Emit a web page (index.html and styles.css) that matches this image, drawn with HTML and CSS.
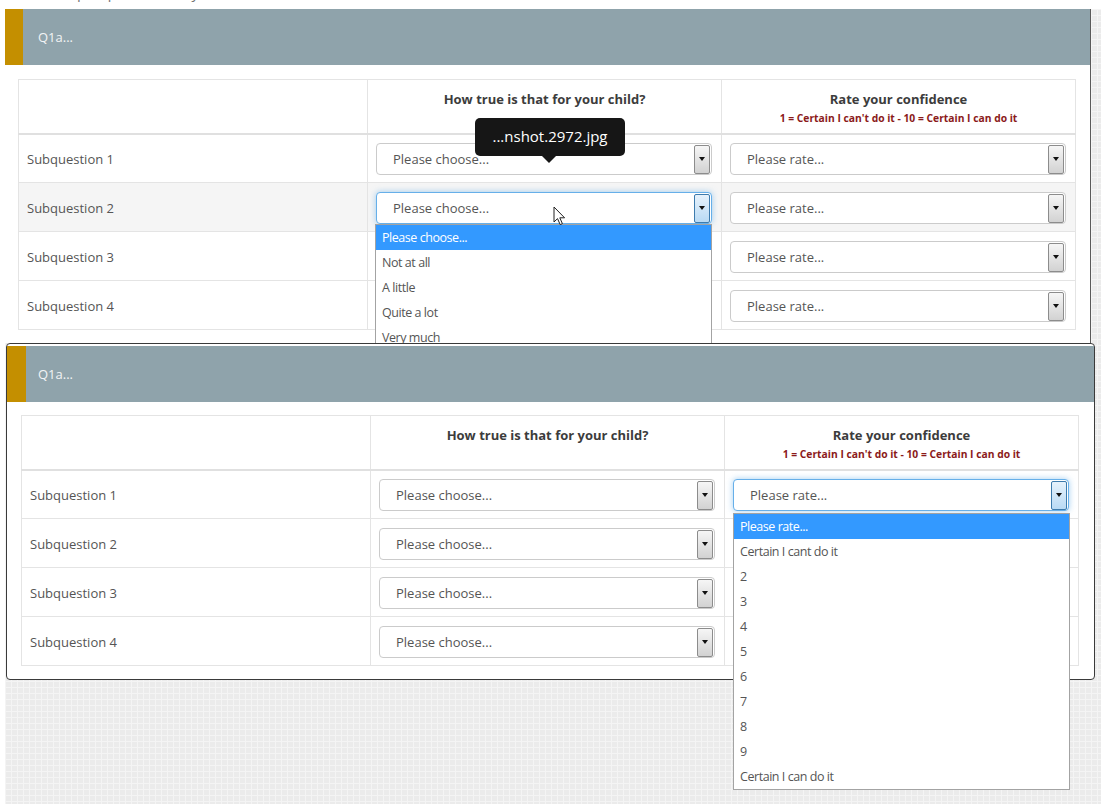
FILE: index.html
```html
<!DOCTYPE html>
<html>
<head>
<meta charset="utf-8">
<link rel="stylesheet" href="styles.css">
</head>
<body>
<div class="topline"><span>1 Example question for your child</span></div>
<div class="canvas">
  <section class="panel panel-a">
    <div class="panel-head"><span class="bar"></span><span class="title">Q1a...</span></div>
    <div class="panel-body">
      <table class="grid">
        <colgroup><col class="c1"><col class="c2"><col class="c3"></colgroup>
        <thead>
          <tr>
            <th></th>
            <th>How true is that for your child?</th>
            <th>Rate your confidence<div class="sub">1 = Certain I can't do it - 10 = Certain I can do it</div></th>
          </tr>
        </thead>
        <tbody>
          <tr><td class="q">Subquestion 1</td><td><div class="select"><span class="lbl">Please choose...</span><span class="btn"></span></div></td><td><div class="select"><span class="lbl">Please rate...</span><span class="btn"></span></div></td></tr>
          <tr class="hover"><td class="q">Subquestion 2</td><td><div class="select focus"><span class="lbl">Please choose...</span><span class="btn"></span></div></td><td><div class="select"><span class="lbl">Please rate...</span><span class="btn"></span></div></td></tr>
          <tr><td class="q">Subquestion 3</td><td><div class="select"><span class="lbl">Please choose...</span><span class="btn"></span></div></td><td><div class="select"><span class="lbl">Please rate...</span><span class="btn"></span></div></td></tr>
          <tr><td class="q">Subquestion 4</td><td><div class="select"><span class="lbl">Please choose...</span><span class="btn"></span></div></td><td><div class="select"><span class="lbl">Please rate...</span><span class="btn"></span></div></td></tr>
        </tbody>
      </table>
    </div>
    <div class="tooltip">...nshot.2972.jpg</div>
    <ul class="dropdown dd-a">
      <li class="sel">Please choose...</li>
      <li>Not at all</li>
      <li>A little</li>
      <li>Quite a lot</li>
      <li>Very much</li>
    </ul>
    <svg class="cursor" width="13" height="20" viewBox="0 0 13 20"><path d="M1 1 L1 16 L4.5 12.6 L7.2 18.6 L9.4 17.6 L6.8 11.8 L11.6 11.8 Z" fill="#fff" stroke="#222" stroke-width="1" stroke-linejoin="round"/></svg>
  </section>

  <section class="panel panel-b">
    <div class="panel-head"><span class="bar"></span><span class="title">Q1a...</span></div>
    <div class="panel-body">
      <table class="grid">
        <colgroup><col class="c1"><col class="c2"><col class="c3"></colgroup>
        <thead>
          <tr>
            <th></th>
            <th>How true is that for your child?</th>
            <th>Rate your confidence<div class="sub">1 = Certain I can't do it - 10 = Certain I can do it</div></th>
          </tr>
        </thead>
        <tbody>
          <tr><td class="q">Subquestion 1</td><td><div class="select"><span class="lbl">Please choose...</span><span class="btn"></span></div></td><td><div class="select focus"><span class="lbl">Please rate...</span><span class="btn"></span></div></td></tr>
          <tr><td class="q">Subquestion 2</td><td><div class="select"><span class="lbl">Please choose...</span><span class="btn"></span></div></td><td><div class="select"><span class="lbl">Please rate...</span><span class="btn"></span></div></td></tr>
          <tr><td class="q">Subquestion 3</td><td><div class="select"><span class="lbl">Please choose...</span><span class="btn"></span></div></td><td><div class="select"><span class="lbl">Please rate...</span><span class="btn"></span></div></td></tr>
          <tr><td class="q">Subquestion 4</td><td><div class="select"><span class="lbl">Please choose...</span><span class="btn"></span></div></td><td><div class="select"><span class="lbl">Please rate...</span><span class="btn"></span></div></td></tr>
        </tbody>
      </table>
    </div>
    <ul class="dropdown dd-b">
      <li class="sel">Please rate...</li>
      <li>Certain I cant do it</li>
      <li>2</li>
      <li>3</li>
      <li>4</li>
      <li>5</li>
      <li>6</li>
      <li>7</li>
      <li>8</li>
      <li>9</li>
      <li>Certain I can do it</li>
    </ul>
  </section>
</div>
</body>
</html>
```

FILE: styles.css
```css
html, body {
  margin: 0;
  padding: 0;
  background: #ffffff;
  font-family: "Open Sans", "Noto Sans", sans-serif;
  color: #555;
}

.topline {
  height: 9px;
  overflow: hidden;
  padding-left: 26px;
}
.topline span {
  display: block;
  margin-top: -17px;
  font-size: 15px;
  line-height: 18px;
  color: #777;
}

.canvas {
  margin-left: 5px;
  height: 795px;
  background-color: #ebebeb;
  background-image:
    linear-gradient(#f4f4f4 1px, transparent 1px),
    linear-gradient(90deg, #f4f4f4 1px, transparent 1px);
  background-size: 6px 6px;
}

.panel {
  position: relative;
  background: #fff;
  box-sizing: border-box;
}

.panel-a {
  width: 1086px;
  height: 334px;
  overflow: hidden;
  border-right: 1px solid #5a5a5a;
}

.panel-b {
  margin-left: 1px;
  width: 1089px;
  border: 1px solid #3a3a3a;
  border-radius: 4px;
  padding-top: 2px;
}

.panel-head {
  display: flex;
  align-items: center;
  height: 56px;
  background: #8fa3ab;
}
.panel-head .bar {
  align-self: stretch;
  width: 18px;
  background: #c48f00;
}
.panel-head .title {
  padding-left: 15px;
  font-size: 13px;
  color: #f2f4f5;
}
.panel-b .panel-head .bar { width: 19px; }
.panel-b .panel-head .title { padding-left: 12px; }

.panel-a .panel-body { padding: 14px 14px 0 13px; }
.panel-b .panel-body { padding: 13px 14px 13px 14px; }

.grid {
  width: 1057px;
  border-collapse: collapse;
  table-layout: fixed;
  border: 1px solid #e4e4e4;
}
.grid col.c1 { width: 349px; }
.grid col.c2 { width: 354px; }
.grid col.c3 { width: 354px; }

.grid th {
  height: 54px;
  box-sizing: border-box;
  padding: 9px 8px 0 8px;
  vertical-align: top;
  border-left: 1px solid #e4e4e4;
  border-bottom: 2px solid #e0e0e0;
  font-size: 13px;
  line-height: 20px;
  font-weight: 700;
  color: #3c3c3c;
  text-align: center;
}
.grid th:first-child { border-left: none; }
.grid th .sub {
  margin-top: 1px;
  font-size: 10.3px;
  line-height: 16px;
  color: #8b1a1a;
}

.grid td {
  height: 49px;
  box-sizing: border-box;
  padding: 2px 9px 0 8px;
  border-left: 1px solid #e4e4e4;
  border-top: 1px solid #e4e4e4;
  vertical-align: middle;
}
.grid td.q {
  border-left: none;
  font-size: 13px;
  color: #555;
}
.grid tr.hover td { background: #f5f5f5; }

.select {
  display: flex;
  align-items: center;
  height: 32px;
  box-sizing: border-box;
  border: 1px solid #cbcbcb;
  border-radius: 4px;
  background: #fff;
  padding-left: 16px;
  font-size: 13px;
  color: #555;
}
.select .lbl { flex: 1; }
.select .btn {
  display: flex;
  align-items: center;
  justify-content: center;
  width: 16px;
  height: 29px;
  margin-right: 1px;
  box-sizing: border-box;
  border: 1px solid #8c8c8c;
  border-radius: 2px;
  background: linear-gradient(#f6f6f6, #d2d2d2);
}
.select .btn::before {
  content: "";
  border-left: 3px solid transparent;
  border-right: 3px solid transparent;
  border-top: 4px solid #111;
}
.select.focus {
  border-color: #66afe9;
  box-shadow: 0 0 6px rgba(102, 175, 233, 0.6);
}
.select.focus .btn {
  border-color: #3d7bad;
  background: linear-gradient(#e6f2fc, #b9daf4);
}

.tooltip {
  position: absolute;
  left: 470px;
  top: 109px;
  width: 150px;
  height: 38px;
  border-radius: 5px;
  background: #161616;
  color: #fff;
  font-size: 15px;
  line-height: 36px;
  text-align: center;
}
.tooltip::after {
  content: "";
  position: absolute;
  left: 67px;
  bottom: -7px;
  border-left: 7px solid transparent;
  border-right: 7px solid transparent;
  border-top: 7px solid #161616;
}

.dropdown {
  position: absolute;
  margin: 0;
  padding: 0;
  list-style: none;
  width: 337px;
  box-sizing: border-box;
  border: 1px solid #a3a3a3;
  background: #fff;
  font-size: 12.5px;
  letter-spacing: -0.45px;
  color: #555;
}
.dropdown li {
  height: 25px;
  line-height: 25px;
  padding-left: 6px;
}
.dropdown li.sel {
  background: #3399ff;
  color: #fff;
}
.dd-a { left: 370px; top: 215px; }
.dd-b { left: 726px; top: 169px; }

.cursor {
  position: absolute;
  left: 548px;
  top: 197px;
}
```
